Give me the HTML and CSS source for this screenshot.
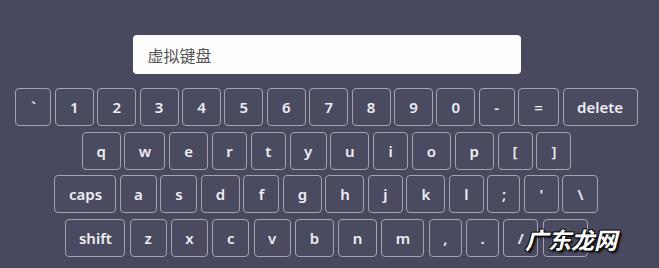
FILE: index.html
```html
<!DOCTYPE html>
<html lang="zh-CN">
<head>
<meta charset="utf-8">
<title>虚拟键盘</title>
<link rel="stylesheet" href="styles.css">
</head>
<body>
<div class="page">
  <div class="display">虚拟键盘</div>
  <div class="keyboard">
    <div class="row row-num">
      <span class="key key-sm">`</span>
      <span class="key">1</span>
      <span class="key">2</span>
      <span class="key">3</span>
      <span class="key">4</span>
      <span class="key">5</span>
      <span class="key">6</span>
      <span class="key">7</span>
      <span class="key">8</span>
      <span class="key">9</span>
      <span class="key">0</span>
      <span class="key key-sm">-</span>
      <span class="key key-lg">=</span>
      <span class="key key-delete">delete</span>
    </div>
    <div class="row row-top">
      <span class="key">q</span>
      <span class="key key-lg">w</span>
      <span class="key">e</span>
      <span class="key key-s">r</span>
      <span class="key key-s">t</span>
      <span class="key key-md">y</span>
      <span class="key">u</span>
      <span class="key key-s">i</span>
      <span class="key">o</span>
      <span class="key">p</span>
      <span class="key key-s">[</span>
      <span class="key key-s">]</span>
    </div>
    <div class="row row-home">
      <span class="key key-caps">caps</span>
      <span class="key key-md">a</span>
      <span class="key key-md">s</span>
      <span class="key">d</span>
      <span class="key key-sm">f</span>
      <span class="key">g</span>
      <span class="key">h</span>
      <span class="key key-s">j</span>
      <span class="key">k</span>
      <span class="key key-s">l</span>
      <span class="key key-xs">;</span>
      <span class="key key-s">'</span>
      <span class="key key-sm">\</span>
    </div>
    <div class="row row-bottom">
      <span class="key key-shift">shift</span>
      <span class="key key-md">z</span>
      <span class="key key-md">x</span>
      <span class="key key-md">c</span>
      <span class="key key-md">v</span>
      <span class="key">b</span>
      <span class="key">n</span>
      <span class="key key-xl">m</span>
      <span class="key key-xs">,</span>
      <span class="key key-xs">.</span>
      <span class="key key-s">/</span>
      <span class="key key-blank"></span>
    </div>
  </div>
</div>
<div class="watermark">广东龙网</div>
</body>
</html>
```
FILE: styles.css
```css
html, body {
  margin: 0;
  padding: 0;
}
body {
  background: #48485e;
  width: 659px;
  height: 268px;
  overflow: hidden;
  position: relative;
  font-family: "Noto Sans", "Open Sans", sans-serif;
}
.page {
  width: 653px;
  padding-top: 35px;
  display: flex;
  flex-direction: column;
  align-items: center;
}
.display {
  width: 388px;
  height: 39px;
  box-sizing: border-box;
  background: #fdfdfe;
  border-radius: 4px;
  padding-left: 15px;
  display: flex;
  align-items: center;
  font-family: "Noto Sans CJK SC", "Noto Sans", sans-serif;
  font-size: 16px;
  color: #555555;
}
.keyboard {
  margin-top: 14px;
  display: flex;
  flex-direction: column;
  align-items: center;
  gap: 5.7px;
}
.row {
  display: flex;
  gap: 3.8px;
}
.row-num { gap: 3.4px; }
.row-top { gap: 3.8px; }
.row-home { gap: 3.5px; }
.row-bottom { gap: 4.3px; }
.key {
  box-sizing: border-box;
  width: 39px;
  height: 38px;
  border: 1px solid #a3a3b4;
  border-radius: 4px;
  background: #4a4a60;
  color: #eeeef3;
  font-size: 15px;
  font-weight: 600;
  display: flex;
  align-items: center;
  justify-content: center;
}
.key-xs { width: 33px; }
.key-s { width: 35px; }
.key-sm { width: 36px; }
.key-md { width: 37px; }
.key-lg { width: 41px; }
.key-xl { width: 43px; }
.key-blank { width: 45px; }
.key-shift { width: 60px; }
.key-caps { width: 62px; }
.key-delete { width: 75px; }
.watermark {
  position: absolute;
  left: 525px;
  top: 222px;
  font-family: "Noto Sans CJK SC", sans-serif;
  font-size: 23px;
  font-weight: 700;
  font-style: italic;
  color: #ffffff;
  text-shadow: 1px 1px 0 #111, -1px -1px 0 #111, 1px -1px 0 #111, -1px 1px 0 #111, 2px 2px 2px #000;
}
```
